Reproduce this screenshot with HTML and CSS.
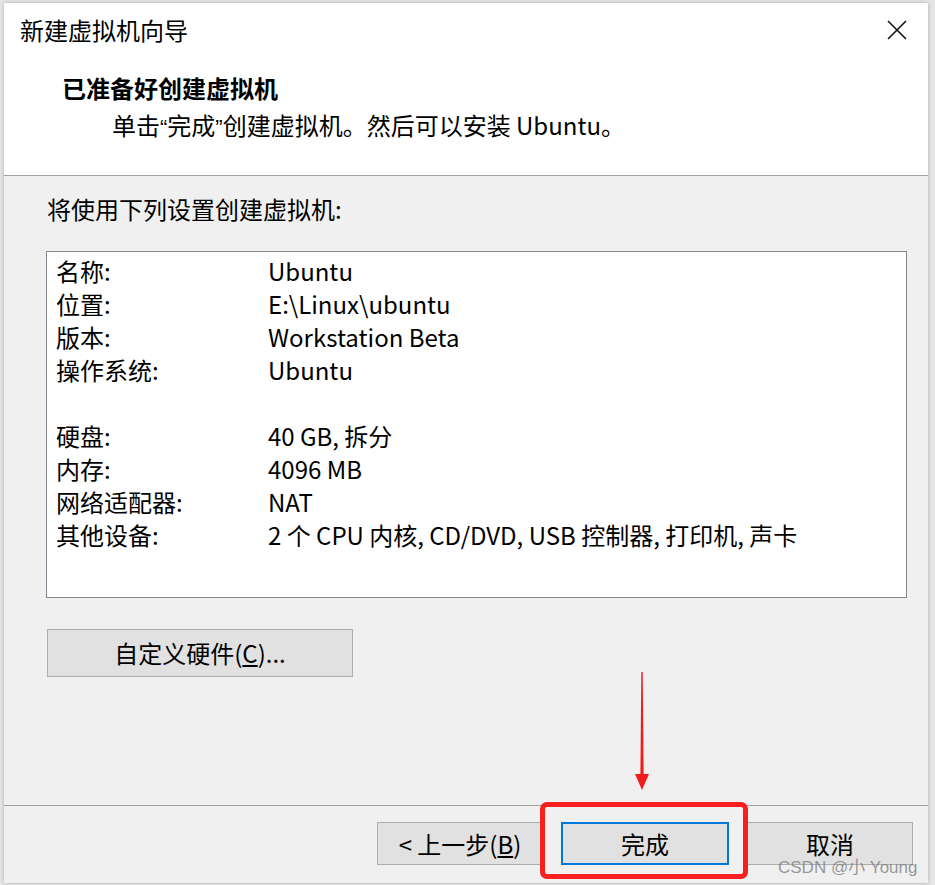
FILE: index.html
```html
<!DOCTYPE html>
<html lang="zh-CN">
<head>
<meta charset="utf-8">
<title>新建虚拟机向导</title>
<link rel="stylesheet" href="styles.css">
</head>
<body>
<div class="dialog">
  <div class="header">
    <div class="titlebar">
      <span class="title">新建虚拟机向导</span>
      <svg class="close" width="20" height="20" viewBox="0 0 20 20"><path d="M1 1 L19 19 M19 1 L1 19" stroke="#111" stroke-width="1.6" fill="none"/></svg>
    </div>
    <div class="heading">已准备好创建虚拟机</div>
    <div class="subtitle">单击<span class="q">“</span>完成<span class="q">”</span>创建虚拟机。然后可以安装 Ubuntu。</div>
  </div>
  <div class="main">
    <div class="intro">将使用下列设置创建虚拟机:</div>
    <div class="listbox">
      <div class="row"><span class="k">名称:</span><span class="v">Ubuntu</span></div>
      <div class="row"><span class="k">位置:</span><span class="v">E:\Linux\ubuntu</span></div>
      <div class="row"><span class="k">版本:</span><span class="v">Workstation Beta</span></div>
      <div class="row"><span class="k">操作系统:</span><span class="v">Ubuntu</span></div>
      <div class="row"></div>
      <div class="row"><span class="k">硬盘:</span><span class="v">40 GB, 拆分</span></div>
      <div class="row"><span class="k">内存:</span><span class="v">4096 MB</span></div>
      <div class="row"><span class="k">网络适配器:</span><span class="v">NAT</span></div>
      <div class="row"><span class="k">其他设备:</span><span class="v">2 个 CPU 内核, CD/DVD, USB 控制器, 打印机, 声卡</span></div>
    </div>
    <div class="btn custom">自定义硬件(<u>C</u>)...</div>
  </div>
  <div class="footer">
    <div class="btn back">&lt; 上一步(<u>B</u>)</div>
    <div class="btn finish">完成</div>
    <div class="btn cancel">取消</div>
  </div>
</div>
<div class="redbox"></div>
<svg class="arrow" width="20" height="122" viewBox="0 0 20 122">
  <path d="M9.3 0 L10.7 0 L11.6 102 L17 102 L10 118 L3 102 L8.4 102 Z" fill="#f31c1c"/>
</svg>
<div class="watermark">CSDN @小 Young</div>
</body>
</html>
```

FILE: styles.css
```css
html, body {
  margin: 0;
  padding: 0;
}
body {
  background: #e6e6e6;
  width: 935px;
  height: 885px;
  overflow: hidden;
  position: relative;
  font-family: "Noto Sans CJK SC", sans-serif;
  color: #000;
}
.dialog {
  position: absolute;
  left: 4px;
  top: 3px;
  width: 924px;
  height: 880px;
  background: #f0f0f0;
  box-shadow: 0 0 4px rgba(0,0,0,0.25);
  display: flex;
  flex-direction: column;
}
.header {
  height: 172px;
  background: #fff;
  border-bottom: 1px solid #a0a0a0;
  flex: none;
}
.titlebar {
  display: flex;
  justify-content: space-between;
  align-items: center;
  padding: 12px 21px 0 16px;
  height: 30px;
}
.title {
  font-size: 24px;
  line-height: 30px;
}
.close {
  display: block;
}
.heading {
  margin: 28px 0 0 58px;
  font-size: 24px;
  line-height: 30px;
  font-weight: bold;
}
.subtitle {
  margin: 7px 0 0 108px;
  font-size: 24px;
  line-height: 30px;
}
.q {
  font-family: "Liberation Sans", sans-serif;
  font-size: 22px;
}
.main {
  height: 630px;
  flex: none;
  padding: 18px 0 0 42px;
  box-sizing: border-box;
  border-bottom: 1px solid #a0a0a0;
}
.intro {
  font-size: 24px;
  line-height: 30px;
  padding-left: 1px;
}
.listbox {
  margin-top: 27px;
  width: 861px;
  height: 347px;
  box-sizing: border-box;
  background: #fff;
  border: 1px solid #828790;
  padding: 2px 0 0 9px;
}
.row {
  display: flex;
  height: 33px;
  align-items: center;
  font-size: 24px;
  line-height: 30px;
}
.k {
  width: 212px;
  flex: none;
}
.btn {
  background: #e1e1e1;
  border: 1px solid #adadad;
  box-sizing: border-box;
  display: flex;
  align-items: center;
  justify-content: center;
  font-size: 24px;
  line-height: 30px;
}
.custom {
  margin: 31px 0 0 1px;
  width: 306px;
  height: 48px;
}
.footer {
  flex: 1;
  display: flex;
  justify-content: flex-end;
  align-items: flex-start;
  gap: 18px;
  padding: 16px 15px 0 0;
}
.back, .cancel {
  width: 166px;
  height: 43px;
}
.finish {
  width: 168px;
  height: 43px;
  border: 2px solid #0078d7;
}
.redbox {
  position: absolute;
  left: 540px;
  top: 802px;
  width: 208px;
  height: 77px;
  box-sizing: border-box;
  border: 5px solid #f81f1f;
  border-radius: 7px;
}
.arrow {
  position: absolute;
  left: 632px;
  top: 672px;
}
.watermark {
  position: absolute;
  left: 778px;
  top: 858px;
  font-size: 17px;
  line-height: 20px;
  color: rgba(120,120,120,0.75);
  font-family: "Liberation Sans", "Noto Sans CJK SC", sans-serif;
  white-space: nowrap;
}
```
